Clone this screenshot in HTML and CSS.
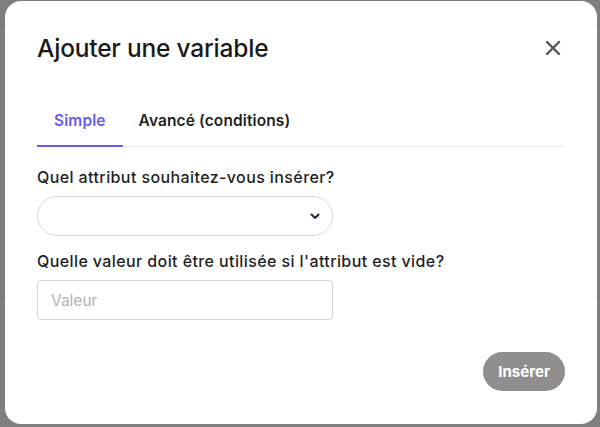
FILE: index.html
```html
<!DOCTYPE html>
<html lang="fr">
<head>
<meta charset="utf-8">
<link rel="stylesheet" href="styles.css">
</head>
<body>
<div class="backdrop">
  <div class="bg-line bg-line-top"></div>
  <div class="bg-line bg-line-mid"></div>
  <div class="modal">
    <div class="header">
      <h1 class="title">Ajouter une variable</h1>
      <button class="close" aria-label="Fermer">
        <svg width="16" height="16" viewBox="0 0 16 16"><path d="M2 2L14 14M14 2L2 14" stroke="#555" stroke-width="2.4" stroke-linecap="round"/></svg>
      </button>
    </div>
    <div class="tabs">
      <div class="tab active">Simple</div>
      <div class="tab">Avancé (conditions)</div>
    </div>
    <div class="field">
      <label class="label">Quel attribut souhaitez-vous insérer?</label>
      <div class="select">
        <svg width="10" height="7" viewBox="0 0 10 7"><path d="M1.5 1.5L5 5L8.5 1.5" fill="none" stroke="#1f2d3d" stroke-width="2" stroke-linecap="round" stroke-linejoin="round"/></svg>
      </div>
    </div>
    <div class="field">
      <label class="label">Quelle valeur doit être utilisée si l'attribut est vide?</label>
      <div class="input">Valeur</div>
    </div>
    <div class="footer">
      <button class="btn">Insérer</button>
    </div>
  </div>
</div>
</body>
</html>
```

FILE: styles.css
```css
* { box-sizing: border-box; }
html, body { margin: 0; padding: 0; }
body {
  width: 600px;
  height: 427px;
  overflow: hidden;
  font-family: Inter, "Noto Sans", sans-serif;
  background: #7f7f7f;
}
.backdrop {
  position: relative;
  width: 600px;
  height: 427px;
  padding: 1px 3px 3px 5px;
}
.bg-line {
  position: absolute;
  left: 0;
  right: 0;
  height: 1px;
  background: #6e6e6e;
}
.bg-line-top { top: 25px; }
.bg-line-mid { top: 297px; }
.modal {
  position: relative;
  width: 592px;
  height: 423px;
  background: #fff;
  border-radius: 16px;
  padding: 30px 32px 0 32px;
}
.header {
  display: flex;
  justify-content: space-between;
  align-items: center;
  height: 34px;
}
.title {
  margin: 0;
  font-size: 24.5px;
  font-weight: 500;
  color: #1a1a1a;
  letter-spacing: -0.2px;
}
.close {
  border: 0;
  background: none;
  padding: 0;
  margin-right: 4px;
  width: 16px;
  height: 16px;
  display: flex;
}
.tabs {
  display: flex;
  margin-top: 38px;
  border-bottom: 1px solid #ebebeb;
}
.tab {
  font-size: 15.5px;
  font-weight: 600;
  color: #1f1f1f;
  padding: 8px 17px 15px 17px;
  margin-bottom: -1px;
  border-bottom: 2px solid transparent;
  letter-spacing: 0.1px;
}
.tab + .tab { padding-left: 16px; }
.tab.active {
  color: #6b5ce7;
  border-bottom-color: #6b5ce7;
}
.field {
  margin-top: 20px;
}
.field + .field { margin-top: 15px; }
.label {
  display: block;
  font-size: 16px;
  font-weight: 500;
  color: #1f1f1f;
  margin-bottom: 9px;
  letter-spacing: 0.4px;
}
.select {
  width: 296px;
  height: 40px;
  border: 1px solid #d5d5d5;
  border-radius: 20px;
  display: flex;
  justify-content: flex-end;
  align-items: center;
  padding-right: 12px;
}
.input {
  width: 296px;
  height: 40px;
  border: 1px solid #d5d5d5;
  border-radius: 4px;
  display: flex;
  align-items: center;
  padding-left: 13px;
  font-size: 15.5px;
  color: #b3b3b3;
}
.footer {
  display: flex;
  justify-content: flex-end;
  margin-top: 32px;
}
.btn {
  font-family: Inter, "Noto Sans", sans-serif;
  height: 39px;
  padding: 0 15px;
  border: 0;
  border-radius: 20px;
  background: #8f8f8f;
  color: #fff;
  font-size: 15px;
  font-weight: 700;
}
```
